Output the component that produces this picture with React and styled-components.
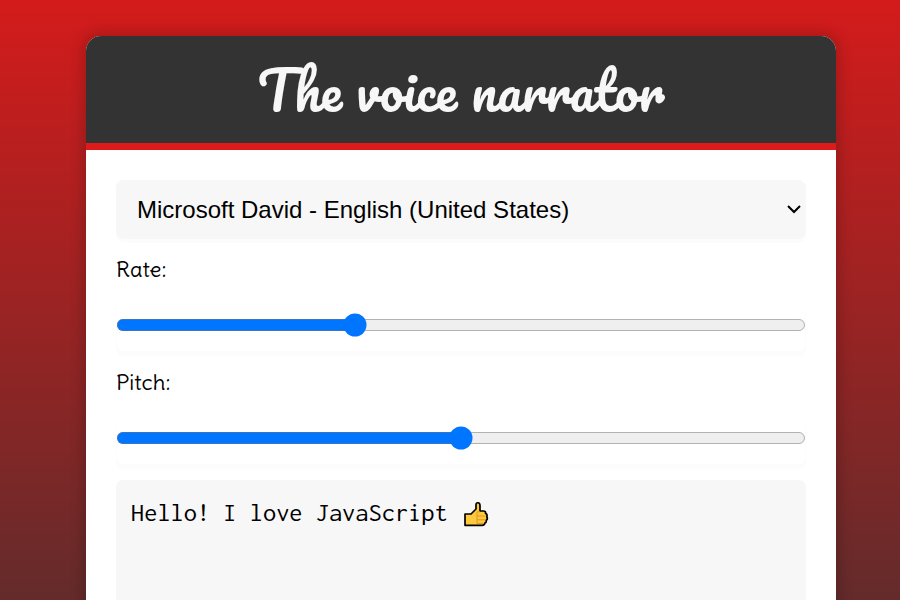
import React from 'react';
import styled, { createGlobalStyle } from 'styled-components';

const GlobalStyle = createGlobalStyle`
  * { box-sizing: border-box; }
  html { height: 600px; overflow: hidden; }
  body {
    margin: 0;
    height: 600px;
    overflow: hidden;
    background: linear-gradient(to bottom, #d41b1b 0, #642b2b 600px);
    font-family: Delius, 'Open Sans', sans-serif;
    color: #000;
  }
`;

const Page = styled.main`
  display: flex;
  justify-content: center;
  height: 600px;
  padding: 36px 0 0 22px;
  overflow: hidden;
`;

const Card = styled.section`
  width: 750px;
  height: 900px;
  background: #fff;
  border-radius: 15px;
  overflow: hidden;
  box-shadow: 0 0 12px 5px rgba(0, 0, 0, 0.15);
`;

const Title = styled.h1`
  height: 114px;
  margin: 0;
  background: #333;
  border-bottom: 7px solid #de1a1a;
  color: #f7f7f7;
  text-align: center;
  font: 400 52.5px/109px Pacifico, cursive;
  white-space: nowrap;
`;

const Form = styled.form`
  display: flex;
  flex-direction: column;
  padding: 30px;
`;

const VoiceSelect = styled.select`
  zoom: 1.5;
  width: 460px;
  height: 39.333px;
  border: 0;
  border-radius: 5px;
  padding: 0 10px;
  background: #f7f7f7;
  color: #000;
  font: 16px 'Liberation Sans', Arial, sans-serif;
  box-shadow: 0 2.667px 0 rgba(0, 0, 0, 0.012);
`;

const Label = styled.label`
  height: 30px;
  margin-top: 15px;
  font-size: 22px;
  line-height: 30px;
`;

const Slider = styled.input`
  zoom: 1.5;
  width: 460px;
  height: 36px;
  margin: 9.333px 0 0;
  border-radius: 5px;
  accent-color: #0075ff;
  box-shadow: 0 3px 0 rgba(0, 0, 0, 0.012);
`;

const Message = styled.div`
  display: flex;
  align-items: flex-start;
  gap: 15px;
  height: 240px;
  margin-top: 15px;
  padding: 17px 15px;
  border-radius: 7px;
  background: #f7f7f7;
  font: 26.4px/30px Inconsolata, 'DejaVu Sans Mono', monospace;
  white-space: pre;
`;

const Thumb = styled.svg`
  width: 26px;
  height: 26px;
  margin-top: 4px;
`;

function ThumbsUp() {
  return (
    <Thumb viewBox="0 0 26 26" aria-label="thumbs up">
      <path
        d="M2 13H8L13 8V3.5C13 1 17 1 17 4.5V10H20.5C22 10 22.8 11 22.6 12.4C24 13 24.4 14.5 23.8 15.8C24.6 17 24.5 18.3 23.2 19.4C23.5 21 22.8 22 21.8 22.2C21.5 23.6 20.7 24.3 19.3 24.3H2Z"
        fill="#ffc83d"
        stroke="#000"
        strokeWidth="1.7"
        strokeLinejoin="round"
      />
      <path
        d="M14 11V22.5M17 10.8H14M14 15H22.5M14 18.8H22.5M14 22.4H21"
        fill="none"
        stroke="#d99a25"
        strokeWidth="1"
      />
    </Thumb>
  );
}

export default function App() {
  return (
    <>
      <GlobalStyle />
      <Page>
        <Card>
          <Title>The voice narrator</Title>
          <Form>
            <VoiceSelect>
              <option>Microsoft David - English (United States)</option>
            </VoiceSelect>
            <Label htmlFor="rate">Rate:</Label>
            <Slider id="rate" type="range" min="0" max="100" step="0.1" defaultValue="34.1" />
            <Label htmlFor="pitch">Pitch:</Label>
            <Slider id="pitch" type="range" min="0" max="2" step="0.1" defaultValue="1" />
            <Message>
              Hello! I love JavaScript
              <ThumbsUp />
            </Message>
          </Form>
        </Card>
      </Page>
    </>
  );
}
